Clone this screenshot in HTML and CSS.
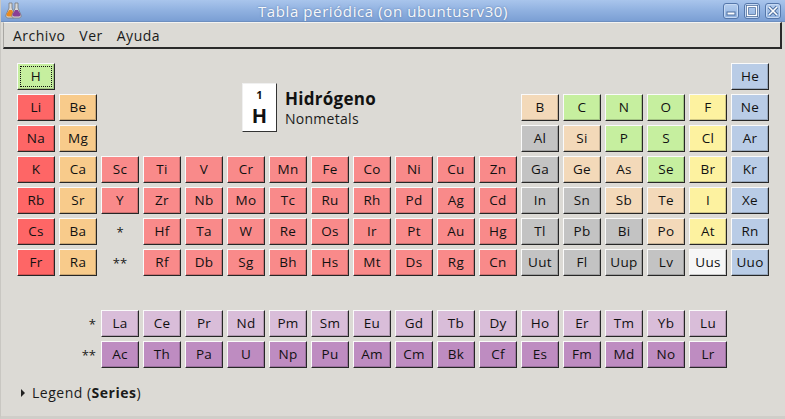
FILE: index.html
```html
<!DOCTYPE html>
<html lang="es">
<head>
<meta charset="utf-8">
<title>Tabla periódica</title>
<link rel="stylesheet" href="styles.css">
</head>
<body>
<div class="window">
  <div class="titlebar">
    <svg class="appicon" width="18" height="18" viewBox="0 0 18 18">
      <path d="M4 1h3v5l3 7c.5 1.5-.3 3-2 3H3c-1.7 0-2.5-1.5-2-3l3-7z" fill="#d9d9d9" stroke="#7a7a7a" stroke-width="0.8"/>
      <path d="M1.6 12l2.6-4h2.6l2.6 4c.4 1.3-.3 2.5-1.6 2.5H3.2c-1.3 0-2-1.2-1.6-2.5z" fill="#e98a1f"/>
      <path d="M10 1h3v5l3 7c.5 1.5-.3 3-2 3H9c-1.7 0-2.5-1.5-2-3l3-7z" fill="#d9d9d9" stroke="#7a7a7a" stroke-width="0.8"/>
      <path d="M7.6 12l2.6-4h2.6l2.6 4c.4 1.3-.3 2.5-1.6 2.5H9.2c-1.3 0-2-1.2-1.6-2.5z" fill="#8a3f95"/>
    </svg>
    <div class="title">Tabla periódica (on ubuntusrv30)</div>
    <div class="wbuttons">
      <div class="wbtn"><svg width="12" height="12" viewBox="0 0 12 12"><rect x="2" y="7" width="8" height="3" fill="#fff" stroke="#4d6f9f" stroke-width="1"/></svg></div>
      <div class="wbtn"><svg width="12" height="12" viewBox="0 0 12 12"><rect x="1.5" y="1.5" width="9" height="9" fill="none" stroke="#4d6f9f" stroke-width="3"/><rect x="1.5" y="1.5" width="9" height="9" fill="none" stroke="#fff" stroke-width="1.4"/></svg></div>
      <div class="wbtn"><svg width="12" height="12" viewBox="0 0 12 12"><path d="M2 2l8 8M10 2l-8 8" stroke="#4d6f9f" stroke-width="3.4"/><path d="M2 2l8 8M10 2l-8 8" stroke="#fff" stroke-width="1.6"/></svg></div>
    </div>
  </div>
  <div class="menubar">
    <span class="menuitem">Archivo</span>
    <span class="menuitem">Ver</span>
    <span class="menuitem">Ayuda</span>
  </div>
  <div class="content">
    <div class="table">
      <div class="el nm sel c1 r1"><span>H</span></div>
      <div class="el ng c18 r1">He</div>
      <div class="info">
        <div class="infobox"><div class="num">1</div><div class="sym">H</div></div>
        <div class="infotext"><div class="name">Hidrógeno</div><div class="series">Nonmetals</div></div>
      </div>

      <div class="el am c1 r2">Li</div>
      <div class="el ae c2 r2">Be</div>
      <div class="el md c13 r2">B</div>
      <div class="el nm c14 r2">C</div>
      <div class="el nm c15 r2">N</div>
      <div class="el nm c16 r2">O</div>
      <div class="el hl c17 r2">F</div>
      <div class="el ng c18 r2">Ne</div>

      <div class="el am c1 r3">Na</div>
      <div class="el ae c2 r3">Mg</div>
      <div class="el pm c13 r3">Al</div>
      <div class="el md c14 r3">Si</div>
      <div class="el nm c15 r3">P</div>
      <div class="el nm c16 r3">S</div>
      <div class="el hl c17 r3">Cl</div>
      <div class="el ng c18 r3">Ar</div>

      <div class="el am r4">K</div><div class="el ae r4">Ca</div><div class="el tm r4">Sc</div><div class="el tm r4">Ti</div><div class="el tm r4">V</div><div class="el tm r4">Cr</div><div class="el tm r4">Mn</div><div class="el tm r4">Fe</div><div class="el tm r4">Co</div><div class="el tm r4">Ni</div><div class="el tm r4">Cu</div><div class="el tm r4">Zn</div><div class="el pm r4">Ga</div><div class="el md r4">Ge</div><div class="el md r4">As</div><div class="el nm r4">Se</div><div class="el hl r4">Br</div><div class="el ng r4">Kr</div>

      <div class="el am r5">Rb</div><div class="el ae r5">Sr</div><div class="el tm r5">Y</div><div class="el tm r5">Zr</div><div class="el tm r5">Nb</div><div class="el tm r5">Mo</div><div class="el tm r5">Tc</div><div class="el tm r5">Ru</div><div class="el tm r5">Rh</div><div class="el tm r5">Pd</div><div class="el tm r5">Ag</div><div class="el tm r5">Cd</div><div class="el pm r5">In</div><div class="el pm r5">Sn</div><div class="el md r5">Sb</div><div class="el md r5">Te</div><div class="el hl r5">I</div><div class="el ng r5">Xe</div>

      <div class="el am r6">Cs</div><div class="el ae r6">Ba</div><div class="mark r6">*</div><div class="el tm r6">Hf</div><div class="el tm r6">Ta</div><div class="el tm r6">W</div><div class="el tm r6">Re</div><div class="el tm r6">Os</div><div class="el tm r6">Ir</div><div class="el tm r6">Pt</div><div class="el tm r6">Au</div><div class="el tm r6">Hg</div><div class="el pm r6">Tl</div><div class="el pm r6">Pb</div><div class="el pm r6">Bi</div><div class="el md r6">Po</div><div class="el hl r6">At</div><div class="el ng r6">Rn</div>

      <div class="el am r7">Fr</div><div class="el ae r7">Ra</div><div class="mark r7">**</div><div class="el tm r7">Rf</div><div class="el tm r7">Db</div><div class="el tm r7">Sg</div><div class="el tm r7">Bh</div><div class="el tm r7">Hs</div><div class="el tm r7">Mt</div><div class="el tm r7">Ds</div><div class="el tm r7">Rg</div><div class="el tm r7">Cn</div><div class="el pm r7">Uut</div><div class="el pm r7">Fl</div><div class="el pm r7">Uup</div><div class="el pm r7">Lv</div><div class="el uk r7">Uus</div><div class="el ng r7">Uuo</div>
    </div>

    <div class="fblock">
      <div class="flabel">*</div>
      <div class="el ln">La</div><div class="el ln">Ce</div><div class="el ln">Pr</div><div class="el ln">Nd</div><div class="el ln">Pm</div><div class="el ln">Sm</div><div class="el ln">Eu</div><div class="el ln">Gd</div><div class="el ln">Tb</div><div class="el ln">Dy</div><div class="el ln">Ho</div><div class="el ln">Er</div><div class="el ln">Tm</div><div class="el ln">Yb</div><div class="el ln">Lu</div>
      <div class="flabel">**</div>
      <div class="el ac">Ac</div><div class="el ac">Th</div><div class="el ac">Pa</div><div class="el ac">U</div><div class="el ac">Np</div><div class="el ac">Pu</div><div class="el ac">Am</div><div class="el ac">Cm</div><div class="el ac">Bk</div><div class="el ac">Cf</div><div class="el ac">Es</div><div class="el ac">Fm</div><div class="el ac">Md</div><div class="el ac">No</div><div class="el ac">Lr</div>
    </div>

    <div class="legend"><span class="tri"></span>Legend (<b>Series</b>)</div>
  </div>
</div>
</body>
</html>
```
FILE: styles.css
```css
html, body {
  margin: 0;
  padding: 0;
  background: #dcdad5;
}
body {
  width: 785px;
  height: 419px;
  overflow: hidden;
  font-family: "Open Sans", "Noto Sans", sans-serif;
  color: #1a1a1a;
}
.window {
  width: 785px;
  height: 419px;
  display: flex;
  flex-direction: column;
  background: #dcdad5;
  box-sizing: border-box;
  border-left: 1px solid #c9c7c2;
  border-bottom: 3px solid #d0cec9;
}
.titlebar {
  height: 22px;
  flex: none;
  display: flex;
  align-items: center;
  background: linear-gradient(#a9c5ec, #90b1e0 50%, #7b9fd4);
  border-bottom: 1px solid #6e8fbf;
  box-sizing: border-box;
}
.appicon {
  margin-left: 4px;
  flex: none;
}
.title {
  flex: 1;
  text-align: center;
  font-size: 15px;
  letter-spacing: 0.6px;
  color: #f6f8fb;
  text-shadow: 0 0 2px #5a78a6;
  padding-left: 20px;
}
.wbuttons {
  display: flex;
  gap: 5px;
  margin-right: 4px;
}
.wbtn {
  width: 16px;
  height: 16px;
  box-sizing: border-box;
  border: 1px solid #5577aa;
  border-radius: 3px;
  background: linear-gradient(#b4cdee, #8eb0df);
  box-shadow: inset 0 0 0 1px #c6d9f3;
  display: flex;
  align-items: center;
  justify-content: center;
}
.menubar {
  height: 27px;
  flex: none;
  margin: 0 3px 0 2px;
  box-sizing: border-box;
  border-top: 1px solid #f4f3f1;
  border-left: 1px solid #a8a6a2;
  border-right: 2px solid #2a2a2a;
  border-bottom: 2px solid #2a2a2a;
  display: flex;
  align-items: center;
  padding-left: 9px;
  gap: 14px;
  font-size: 14px;
  letter-spacing: 0.5px;
}
.content {
  padding: 14px 0 0 16px;
  flex: 1;
}
.table, .fblock {
  display: grid;
  grid-template-columns: repeat(18, 38px);
  grid-auto-rows: 27px;
  column-gap: 4px;
  row-gap: 4px;
}
.c1 { grid-column: 1; }
.c2 { grid-column: 2; }
.c13 { grid-column: 13; }
.c14 { grid-column: 14; }
.c15 { grid-column: 15; }
.c16 { grid-column: 16; }
.c17 { grid-column: 17; }
.c18 { grid-column: 18; }
.r1 { grid-row: 1; }
.r2 { grid-row: 2; }
.r3 { grid-row: 3; }
.r4 { grid-row: 4; }
.r5 { grid-row: 5; }
.r6 { grid-row: 6; }
.r7 { grid-row: 7; }
.fblock {
  margin-top: 34px;
}
.el {
  box-sizing: border-box;
  border: 1px solid;
  border-color: #fafafa #262626 #262626 #fafafa;
  box-shadow: inset -1px -1px 0 rgba(0,0,0,0.18);
  display: flex;
  align-items: center;
  justify-content: center;
  font-size: 13.5px;
  letter-spacing: 0.3px;
  color: #111;
  padding-bottom: 1px;
}
.el.sel span {
  display: flex;
  align-items: center;
  justify-content: center;
  width: 30px;
  height: 19px;
  outline: 1px dotted #111;
}
.mark {
  display: flex;
  align-items: center;
  justify-content: center;
  font-size: 13px;
}
.flabel {
  grid-column: 2;
  display: flex;
  align-items: center;
  justify-content: flex-end;
  font-size: 13px;
  padding-right: 1px;
}
.info {
  grid-column: 3 / 13;
  grid-row: 1 / 4;
  display: flex;
  align-items: center;
  justify-content: center;
  gap: 8px;
}
.infobox {
  width: 35px;
  height: 49px;
  box-sizing: border-box;
  background: #ffffff;
  border: 1px solid;
  border-color: #f0f0f0 #333 #333 #f0f0f0;
  display: flex;
  flex-direction: column;
  align-items: center;
  justify-content: center;
  font-weight: bold;
  color: #111;
}
.infobox .num {
  font-size: 11px;
  line-height: normal;
}
.infobox .sym {
  font-size: 20px;
  line-height: normal;
}
.infotext {
  display: flex;
  flex-direction: column;
  gap: 1px;
}
.infotext .name {
  font-size: 17px;
  font-weight: bold;
  letter-spacing: 0.3px;
  line-height: 20px;
  color: #111;
}
.infotext .series {
  font-size: 14px;
  letter-spacing: 0.3px;
  line-height: 17px;
}
.legend {
  margin-top: 15px;
  margin-left: 4px;
  font-size: 14px;
  letter-spacing: 0.5px;
  display: flex;
  align-items: center;
}
.tri {
  width: 0;
  height: 0;
  border-top: 4px solid transparent;
  border-bottom: 4px solid transparent;
  border-left: 4px solid #222;
  margin-right: 7px;
}
.nm { background: #c6ef9f; }
.am { background: #fe6666; }
.ae { background: #f8cb8b; }
.tm { background: #f98a8a; }
.pm { background: #c3c3c3; }
.md { background: #f3d9b9; }
.hl { background: #fdf2a0; }
.ng { background: #b9cce6; }
.uk { background: #f6f6f6; }
.ln { background: #d9bdd9; }
.ac { background: #be8cc1; }
```
